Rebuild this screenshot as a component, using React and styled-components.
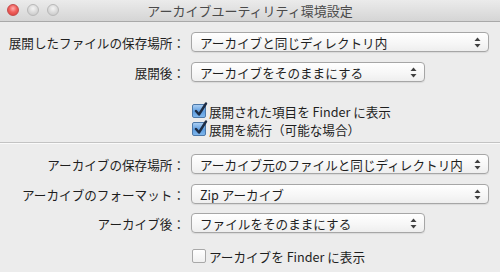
import React from "react";
import styled, { createGlobalStyle } from "styled-components";

const GlobalStyle = createGlobalStyle`
  html, body {
    margin: 0;
    padding: 0;
    background: #ececec;
  }
  body {
    font-family: "Noto Sans CJK JP", "Noto Sans", sans-serif;
    -webkit-font-smoothing: antialiased;
  }
`;

const Window = styled.div`
  width: 500px;
  height: 272px;
  background: #ececec;
  overflow: hidden;
  display: flex;
  flex-direction: column;
`;

const TitleBar = styled.div`
  height: 22px;
  box-sizing: border-box;
  position: relative;
  display: flex;
  align-items: center;
  justify-content: center;
  background: linear-gradient(#ebebeb, #d5d5d5);
  border-bottom: 1px solid #a9a9a9;
  font-size: 13px;
  color: #4a4a4a;
`;

const Lights = styled.div`
  position: absolute;
  left: 7px;
  top: 4px;
  display: flex;
  gap: 8px;
`;

const Light = styled.span`
  width: 12px;
  height: 12px;
  border-radius: 50%;
  box-sizing: border-box;
  border: 1px solid ${(p) => (p.red ? "#c34b4b" : "#b8b8b8")};
  background: ${(p) =>
    p.red
      ? "radial-gradient(circle at 50% 35%, #ffb0b0 0, #f0605c 45%, #d63a36 100%)"
      : "radial-gradient(circle at 50% 35%, #f4f4f4 0, #d8d8d8 55%, #c4c4c4 100%)"};
`;

const Section = styled.div`
  display: flex;
  flex-direction: column;
  padding-top: ${(p) => p.top}px;
`;

const Row = styled.div`
  display: grid;
  grid-template-columns: 185px auto;
  column-gap: 6px;
  align-items: center;
  height: 20px;
  margin-bottom: ${(p) => p.gap || 0}px;
`;

const Label = styled.div`
  text-align: right;
  white-space: nowrap;
  font-size: 12.6px;
  color: #1e1e1e;
`;

const Popup = styled.div`
  width: ${(p) => p.w}px;
  height: 20px;
  box-sizing: border-box;
  border: 1px solid #a6a6a6;
  border-radius: 4px;
  background: linear-gradient(#ffffff, #f6f6f6 60%, #eeeeee);
  box-shadow: 0 1px 1px rgba(0, 0, 0, 0.08);
  display: flex;
  align-items: center;
  justify-content: space-between;
  padding: 0 7px 0 8px;
  font-size: 12.6px;
  color: #1e1e1e;
  white-space: nowrap;
`;

const CheckRow = styled.label`
  display: flex;
  align-items: center;
  gap: 3px;
  height: 18px;
  padding-left: 192px;
  font-size: 12.6px;
  color: #1e1e1e;
  margin-top: ${(p) => p.top || 0}px;
`;

const Box = styled.span`
  width: 14px;
  height: 14px;
  box-sizing: border-box;
  border-radius: 2px;
  border: 1px solid ${(p) => (p.on ? "#4c78a8" : "#a8a8a8")};
  background: ${(p) =>
    p.on
      ? "linear-gradient(#a9cdf2, #5f9ee0 55%, #7fb6ec)"
      : "linear-gradient(#ffffff, #f0f0f0)"};
  position: relative;
`;

const Check = styled.svg`
  position: absolute;
  left: 1px;
  top: -3px;
`;

const Separator = styled.div`
  margin-top: 4px;
  height: 1px;
  background: #c3c3c3;
  border-bottom: 1px solid #fafafa;
`;

const Arrows = () => (
  <svg width="7" height="11" viewBox="0 0 7 11">
    <path d="M3.5 0.5 L6.5 4 L0.5 4 Z" fill="#404040" />
    <path d="M3.5 10.5 L6.5 7 L0.5 7 Z" fill="#404040" />
  </svg>
);

const Select = ({ w, children }) => (
  <Popup w={w}>
    <span>{children}</span>
    <Arrows />
  </Popup>
);

const CheckBox = ({ on, top, children }) => (
  <CheckRow top={top}>
    <Box on={on}>
      {on && (
        <Check width="14" height="16" viewBox="0 0 14 16">
          <path
            d="M2 9 L5 12.5 L12 1.5"
            fill="none"
            stroke="#1d2c44"
            strokeWidth="2.4"
            strokeLinecap="round"
            strokeLinejoin="round"
          />
        </Check>
      )}
    </Box>
    <span>{children}</span>
  </CheckRow>
);

const App = () => {
  return (
    <Window>
      <GlobalStyle />
      <TitleBar>
        <Lights>
          <Light red />
          <Light />
          <Light />
        </Lights>
        アーカイブユーティリティ環境設定
      </TitleBar>

      <Section top={10}>
        <Row gap={10}>
          <Label>展開したファイルの保存場所：</Label>
          <Select w={298}>アーカイブと同じディレクトリ内</Select>
        </Row>
        <Row>
          <Label>展開後：</Label>
          <Select w={234}>アーカイブをそのままにする</Select>
        </Row>
        <CheckBox on top={20}>
          展開された項目を Finder に表示
        </CheckBox>
        <CheckBox on>展開を続行（可能な場合）</CheckBox>
      </Section>

      <Separator />

      <Section top={10}>
        <Row gap={10}>
          <Label>アーカイブの保存場所：</Label>
          <Select w={298}>アーカイブ元のファイルと同じディレクトリ内</Select>
        </Row>
        <Row gap={9}>
          <Label>アーカイブのフォーマット：</Label>
          <Select w={298}>Zip アーカイブ</Select>
        </Row>
        <Row>
          <Label>アーカイブ後：</Label>
          <Select w={234}>ファイルをそのままにする</Select>
        </Row>
        <CheckBox top={14}>アーカイブを Finder に表示</CheckBox>
      </Section>
    </Window>
  );
};

export default App;
